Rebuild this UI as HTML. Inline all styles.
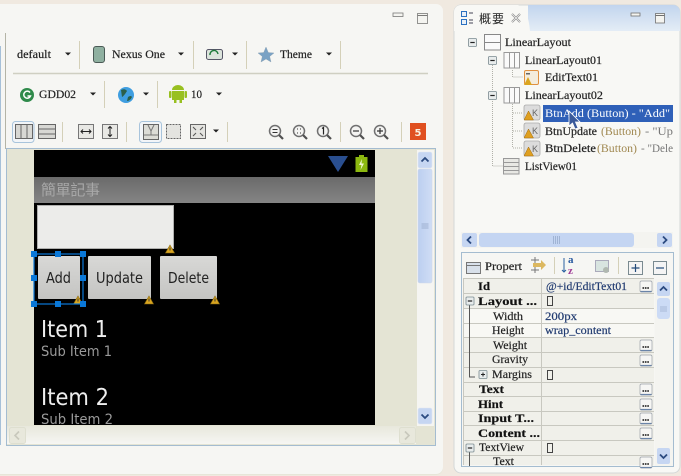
<!DOCTYPE html>
<html><head><meta charset="utf-8">
<style>
html,body{margin:0;padding:0;background:#f0e9e0;width:681px;height:476px;overflow:hidden}
svg{display:block;filter:blur(.3px)}
text{font-family:"Liberation Serif","Noto Serif CJK SC",serif;font-size:12px;fill:#222;stroke:#222;stroke-width:.2px}
.b{font-weight:bold;fill:#111}
.a{font-family:"DejaVu Sans","Noto Sans CJK TC",sans-serif;stroke:none}
</style></head>
<body>
<svg width="681" height="476" viewBox="0 0 681 476" xmlns="http://www.w3.org/2000/svg">
<defs>
<linearGradient id="tab" x1="0" x2="0" y1="0" y2="1"><stop offset="0" stop-color="#c2d5ee"/><stop offset="1" stop-color="#e4edf6"/></linearGradient>
<linearGradient id="btn" x1="0" x2="0" y1="0" y2="1"><stop offset="0" stop-color="#d8d8d6"/><stop offset="1" stop-color="#c4c4c2"/></linearGradient>
<linearGradient id="bar" x1="0" x2="0" y1="0" y2="1"><stop offset="0" stop-color="#6a6a6a"/><stop offset="1" stop-color="#858585"/></linearGradient>
<linearGradient id="hs" x1="0" x2="0" y1="0" y2="1"><stop offset="0" stop-color="#e8e8dc"/><stop offset="1" stop-color="#f6f6f3"/></linearGradient>
<linearGradient id="blu" x1="0" x2="1" y1="0" y2="0"><stop offset="0" stop-color="#bccff0"/><stop offset="1" stop-color="#cfddf5"/></linearGradient>
<path id="dd" d="M-3 -1.500H3L0 1.500Z" fill="#222"/>
<g id="warn"><path d="M0 -4L4.500 4H-4.500Z" fill="#d9a520" stroke="#8a6a10" stroke-width=".6"/><rect x="-.5" y="-1.500" width="1" height="3" fill="#333"/></g>
<g id="h"><rect x="-3" y="-3" width="6" height="6" fill="#0a78d8"/></g>
<g id="mag"><circle r="5.500" fill="#f4f4f2" stroke="#707070" stroke-width="1.500"/><path d="M4 4L8 8" stroke="#505050" stroke-width="2.200"/></g>
<g id="dots"><rect x="0" y="0" width="12" height="11" rx="1.500" fill="#f6f6f4" stroke="#9aa0a8" stroke-width=".7"/><path d="M2.500 7H9.500" stroke="#111" stroke-width="1.600" stroke-dasharray="1.600 .8"/><path d="M.5 10.500H11.500" stroke="#6a84a8" stroke-width="1.200"/></g>
<g id="minus"><rect x="-4" y="-4" width="8" height="8" rx="1" fill="#e8ecec" stroke="#7a8a90" stroke-width=".8"/><path d="M-2.200 0H2.200" stroke="#222" stroke-width="1.200"/></g>
<g id="okb"><rect x="0" y="0" width="16" height="15" rx="2" fill="#dcdcdc" stroke="#aaa" stroke-width=".8"/><text x="8" y="11" class="a" style="font-size:9px;font-family:'Liberation Sans';fill:#666">K</text><path d="M4.500 6L9.500 15H0Z" fill="#dfa020" stroke="#a06a10" stroke-width=".5"/></g>
<path id="up" d="M-3.500 1.500L0 -2L3.500 1.500" fill="none" stroke="#2b4a80" stroke-width="1.800"/>
<path id="down" d="M-3.500 -1.500L0 2L3.500 -1.500" fill="none" stroke="#2b4a80" stroke-width="1.800"/>
</defs>

<rect width="681" height="476" fill="#f0e9e0"/>
<!-- LEFT PANEL -->
<rect x="-10" y="5" width="453" height="470" rx="7" fill="#e6e6d8"/>
<rect x="-10" y="4" width="453" height="470" rx="7" fill="#f6f6f3"/>
<rect x="393" y="13" width="10" height="3.500" fill="#f4f4f0" stroke="#7a7a78" stroke-width=".8"/>
<rect x="417.500" y="13.500" width="10" height="10" fill="#f4f4f0" stroke="#7a7a78" stroke-width=".8"/>
<path d="M417.500 15.500H427.500" stroke="#7a7a78"/>
<path d="M5.500 33V149" stroke="#b4b4a6"/>
<path d="M.5 46V445" stroke="#a6c0d8"/>

<!-- row 1 -->
<text x="17" y="58" textLength="34" lengthAdjust="spacingAndGlyphs">default</text>
<use href="#dd" x="68" y="54"/>
<path d="M79.500 41V69M193.500 41V69M246.500 41V69M340.500 41V69" stroke="#d4d0b8"/>
<rect x="93.500" y="46.500" width="11" height="16" rx="2.500" fill="#8fb0a0" stroke="#4a5a55"/>
<text x="112" y="58" textLength="53" lengthAdjust="spacingAndGlyphs">Nexus One</text>
<use href="#dd" x="181" y="54"/>
<rect x="206.500" y="49.500" width="16" height="10" rx="2" fill="#dce4dc" stroke="#556"/>
<path d="M210 55A4 4 0 0 1 218 54" stroke="#1d7a3a" stroke-width="1.400" fill="none"/>
<use href="#dd" x="235" y="54"/>
<path d="M266 47L268.300 52.500L274 53L269.700 56.500L271 62L266 59L261 62L262.300 56.500L258 53L263.700 52.500Z" fill="#7aa2c4" stroke="#8aa0b0" stroke-width=".4"/>
<text x="280" y="58" textLength="32" lengthAdjust="spacingAndGlyphs">Theme</text>
<use href="#dd" x="329" y="54"/>
<path d="M13 73.500H428" stroke="#cfcfc2" stroke-width="1.500"/>

<!-- row 2 -->
<circle cx="27" cy="95" r="7" fill="#2f8a4a"/><path d="M30 92.500A3.500 3.500 0 1 0 30.500 96H27.500" fill="none" stroke="#fff" stroke-width="1.500"/>
<text x="39" y="98" textLength="37" lengthAdjust="spacingAndGlyphs">GDD02</text>
<use href="#dd" x="93" y="94"/>
<path d="M104.500 81V108M157.500 81V108" stroke="#d4d0b8"/>
<circle cx="126" cy="95" r="8" fill="#3f9ee0"/><path d="M121 90Q125 88 127 91Q124 96 122 97ZM128 97Q131 95 132 97Q130 101 127 101Z" fill="#2b5f4a"/>
<use href="#dd" x="146" y="94"/>
<rect x="172" y="91" width="12" height="9" fill="#98c020"/><path d="M172 90A6 5 0 0 1 184 90Z" fill="#98c020"/>
<rect x="169" y="91" width="2.500" height="7" rx="1" fill="#98c020"/><rect x="184.500" y="91" width="2.500" height="7" rx="1" fill="#98c020"/>
<rect x="174" y="100" width="2.500" height="3" fill="#98c020"/><rect x="179.500" y="100" width="2.500" height="3" fill="#98c020"/>
<text x="191" y="98" textLength="11" lengthAdjust="spacingAndGlyphs">10</text>
<use href="#dd" x="219" y="94"/>

<!-- row 3 -->
<rect x="12.500" y="121.500" width="21.500" height="21" rx="3" fill="#f2f5f8" stroke="#a8c4dc"/>
<rect x="15.500" y="124.500" width="17" height="14" fill="#d8d8d4" stroke="#666"/>
<path d="M21 125V138M27 125V138" stroke="#666"/>
<rect x="38.500" y="124.500" width="17" height="14" fill="#d8d8d4" stroke="#666"/>
<path d="M39 129H55M39 134H55" stroke="#666"/>
<path d="M62.500 122V142M126.500 122V142M227.500 122V142M340.500 122V142M401.500 122V142" stroke="#d4d0b8"/>
<rect x="78.500" y="124.500" width="15" height="14" fill="#e8e8e4" stroke="#777"/>
<path d="M81 131.500H91M83 129.500L81 131.500L83 133.500M89 129.500L91 131.500L89 133.500" stroke="#222" fill="none"/>
<rect x="102.500" y="124.500" width="15" height="14" fill="#e8e8e4" stroke="#777"/>
<path d="M110 126.500V136.500M108 128.500L110 126.500L112 128.500M108 134.500L110 136.500L112 134.500" stroke="#222" fill="none"/>
<rect x="139.500" y="121.500" width="22" height="21" rx="3" fill="#f2f5f8" stroke="#a8c4dc"/>
<rect x="143.500" y="124.500" width="15" height="15" fill="#dcdcd6" stroke="#666"/>
<path d="M148 125L151 131L154 125M151 131V135M144 135H158" stroke="#777" fill="none"/>
<rect x="166.500" y="124.500" width="14" height="14" fill="#e4e4e0" stroke="#666" stroke-dasharray="2 1"/>
<rect x="190.500" y="124.500" width="15" height="14" fill="#e4e4e0" stroke="#666"/>
<path d="M193 127L196 130M203 127L200 130M193 136L196 133M203 136L200 133" stroke="#555"/>
<use href="#dd" x="216" y="131"/>
<use href="#mag" x="275" y="131"/><path d="M272.500 129.500H277.500M272.500 132.500H277.500" stroke="#333"/>
<use href="#mag" x="299" y="131"/><path d="M297 129H298M300 129H301M297 133H298M300 133H301" stroke="#333"/>
<use href="#mag" x="323" y="131"/><path d="M322 128.500L323.500 127.500V134.500" stroke="#222" fill="none" stroke-width="1.200"/>
<use href="#mag" x="356" y="131"/><path d="M353 131H359" stroke="#333" stroke-width="1.200"/>
<use href="#mag" x="380" y="131"/><path d="M377 131H383M380 128V134" stroke="#333" stroke-width="1.200"/>
<rect x="410" y="123" width="16" height="17" fill="#e05020"/>
<text x="414.500" y="136" class="a" style="font-size:10px;font-weight:bold;fill:#f8f0e0">5</text>

<!-- CANVAS -->
<rect x="6.500" y="148.500" width="429" height="297" fill="#e4e4d4" stroke="#a4bcd0"/>
<rect x="34" y="150" width="341" height="275" fill="#000"/>
<path d="M328 156H348L338 172Z" fill="#2a4f90"/>
<rect x="355.500" y="157" width="12" height="15" fill="#8cb810"/><rect x="359" y="155" width="5" height="2" fill="#8cb810"/>
<path d="M362 159L359 165H361.500L360.500 170L364 163.500H361.500Z" fill="#f0f6d0"/>
<rect x="34" y="177" width="341" height="26" fill="url(#bar)"/>
<text x="41" y="195" textLength="59" class="a" style="font-size:15px;fill:#a8a8a8">簡單記事</text>
<rect x="37.500" y="205.500" width="136" height="43" fill="#ececea" stroke="#b0b0ae"/>
<use href="#warn" x="170" y="249"/>

<rect x="38" y="256" width="42" height="43" rx="1" fill="url(#btn)"/>
<rect x="88" y="256" width="63" height="43" rx="1" fill="url(#btn)"/>
<rect x="160" y="256" width="57" height="43" rx="1" fill="url(#btn)"/>
<text x="46" y="283" textLength="25" lengthAdjust="spacingAndGlyphs" class="a" style="font-size:15px;fill:#222">Add</text>
<text x="96" y="283" textLength="47" lengthAdjust="spacingAndGlyphs" class="a" style="font-size:15px;fill:#222">Update</text>
<text x="168" y="283" textLength="41" lengthAdjust="spacingAndGlyphs" class="a" style="font-size:15px;fill:#222">Delete</text>
<use href="#warn" x="78" y="300"/><use href="#warn" x="149" y="300"/><use href="#warn" x="215" y="300"/>
<rect x="34" y="254" width="49" height="50" fill="none" stroke="#0a78d8" stroke-width="1.200"/>
<use href="#h" x="34" y="254"/><use href="#h" x="58" y="254"/><use href="#h" x="83" y="254"/>
<use href="#h" x="34" y="278"/><use href="#h" x="83" y="278"/>
<use href="#h" x="34" y="304"/><use href="#h" x="58" y="304"/><use href="#h" x="83" y="304"/>

<text x="41" y="337" textLength="67" lengthAdjust="spacingAndGlyphs" class="a" style="font-size:23px;fill:#eee">Item 1</text>
<text x="41" y="356" textLength="71" lengthAdjust="spacingAndGlyphs" class="a" style="font-size:14px;fill:#9a9a9a">Sub Item 1</text>
<text x="41" y="405" textLength="68" lengthAdjust="spacingAndGlyphs" class="a" style="font-size:23px;fill:#eee">Item 2</text>
<svg x="34" y="410" width="341" height="15" viewBox="34 410 341 15"><text x="41" y="424" textLength="72" lengthAdjust="spacingAndGlyphs" class="a" style="font-size:14px;fill:#9a9a9a">Sub Item 2</text></svg>

<!-- canvas scrollbars -->
<rect x="417" y="150" width="17" height="276" fill="#f5f5f2"/>
<rect x="418" y="152" width="14" height="16" rx="2" fill="#c6d6f2" stroke="#dfe6f2" stroke-width=".6"/><use href="#up" x="425" y="160"/>
<rect x="418" y="169" width="14" height="114" rx="2" fill="url(#blu)" stroke="#cfd8e8" stroke-width=".6"/>
<path d="M421.500 224H428.500M421.500 226H428.500M421.500 228H428.500" stroke="#9eb0d0"/>
<rect x="418" y="408" width="14" height="16" rx="2" fill="#c6d6f2" stroke="#dfe6f2" stroke-width=".6"/><use href="#down" x="425" y="416"/>
<rect x="7" y="426" width="409" height="18" fill="url(#hs)"/>
<rect x="416" y="426" width="19" height="18" fill="#e4e4d4"/>
<rect x="9.500" y="427.500" width="16" height="16" rx="2" fill="#e8e8dc" stroke="#dedfd0"/><path d="M19 431.500L15 435.500L19 439.500" fill="none" stroke="#c8c8bc" stroke-width="1.600"/>
<rect x="399.500" y="427.500" width="16" height="16" rx="2" fill="#e8e8dc" stroke="#dedfd0"/><path d="M405 431.500L409 435.500L405 439.500" fill="none" stroke="#c8c8bc" stroke-width="1.600"/>

<!-- RIGHT PANEL -->
<rect x="454" y="5" width="226" height="468" rx="7" fill="#f8f8f5" stroke="#d4d8d8"/>
<path d="M528 5H673A7 7 0 0 1 680 12V31H528Z" fill="url(#tab)"/>
<path d="M454 31V12A7 7 0 0 1 461 5H518Q528 8 530 31Z" fill="#f8f8f5"/>
<rect x="461.500" y="11.500" width="5" height="5" fill="#e8f0f8" stroke="#2a70c0"/>
<rect x="461.500" y="19.500" width="5" height="5" fill="#e8f0f8" stroke="#2a70c0"/>
<path d="M469 13H473M469 20H473M469 23H473" stroke="#445"/>
<text x="479" y="23" textLength="25" class="a" style="font-size:12px;fill:#222">概要</text>
<path d="M512 14L520 22M520 14L512 22" stroke="#8a8a8a" stroke-width="2" /><path d="M512 14L520 22M520 14L512 22" stroke="#f4f4f4" stroke-width=".8"/>
<rect x="631" y="13" width="9" height="3" fill="#f4f4f0" stroke="#707070" stroke-width=".8"/>
<rect x="655.500" y="13.500" width="9" height="9.500" fill="#f4f4f0" stroke="#707070" stroke-width=".8"/>
<path d="M655.500 15.500H664.500" stroke="#707070"/>

<!-- tree -->
<path d="M492.500 65V91M492.500 99V166H503M512.500 70V77H523M512.500 104V148M513 113H523M513 131H523M513 148H523" stroke="#b0b0a8" stroke-dasharray="1 1" fill="none"/>
<use href="#minus" x="472.500" y="42.500"/><use href="#minus" x="492.500" y="60.500"/><use href="#minus" x="492.500" y="95.500"/>
<rect x="484.500" y="34.500" width="16" height="15.500" fill="#fafafa" stroke="#888"/><path d="M485 42.500H500" stroke="#888"/>
<rect x="504" y="52.500" width="15.500" height="15.500" fill="#fafafa" stroke="#999"/><path d="M509.500 53V68M514.500 53V68" stroke="#999"/>
<rect x="504" y="87.500" width="15.500" height="15.500" fill="#fafafa" stroke="#999"/><path d="M509.500 88V103M514.500 88V103" stroke="#999"/>
<rect x="524.500" y="70.500" width="14" height="14" rx="1.500" fill="#f4ecdc" stroke="#e09040"/><path d="M528 77L532 85H524Z" fill="#dba520"/><rect x="526" y="73" width="4" height="1.500" fill="#666"/>
<use href="#okb" x="524" y="105"/><use href="#okb" x="524" y="123"/><use href="#okb" x="524" y="141"/>
<rect x="503.500" y="158.500" width="15.500" height="15.500" fill="#e8e8e4" stroke="#999"/><path d="M504 162.500H519M504 166.500H519M504 170.500H519" stroke="#999"/>
<text x="505" y="46" textLength="66" lengthAdjust="spacingAndGlyphs">LinearLayout</text>
<text x="525" y="64" textLength="77" lengthAdjust="spacingAndGlyphs">LinearLayout01</text>
<text x="545" y="81" textLength="53" lengthAdjust="spacingAndGlyphs">EditText01</text>
<text x="525" y="99" textLength="78" lengthAdjust="spacingAndGlyphs">LinearLayout02</text>
<rect x="543" y="105" width="130" height="17" fill="#2f60b8"/>
<text x="545" y="117" textLength="125" lengthAdjust="spacingAndGlyphs" style="fill:#fff;stroke:none">BtnAdd (Button) - "Add"</text>
<text x="545" y="135" textLength="52" lengthAdjust="spacingAndGlyphs">BtnUpdate</text>
<text x="601" y="135" textLength="40" lengthAdjust="spacingAndGlyphs" style="fill:#a08850;stroke:none">(Button)</text>
<text x="645" y="135" textLength="28" lengthAdjust="spacingAndGlyphs" style="fill:#777;stroke:none">- "Up</text>
<text x="545" y="152" textLength="51" lengthAdjust="spacingAndGlyphs">BtnDelete</text>
<text x="597" y="152" textLength="40" lengthAdjust="spacingAndGlyphs" style="fill:#a08850;stroke:none">(Button)</text>
<text x="641" y="152" textLength="32" lengthAdjust="spacingAndGlyphs" style="fill:#777;stroke:none">- "Dele</text>
<text x="525" y="170" textLength="52" lengthAdjust="spacingAndGlyphs">ListView01</text>
<path d="M569 111V126L572.500 123L575 129L578 128L575.500 122H580Z" fill="#3a5a9a" stroke="#fff" stroke-width=".8"/>

<!-- tree h scrollbar -->
<rect x="461" y="232" width="212" height="16" fill="#f4f4f0"/>
<rect x="462" y="233" width="15" height="14" rx="2" fill="#c6d6f2"/><path d="M471 236.500L467.500 240L471 243.500" fill="none" stroke="#2b4a80" stroke-width="1.800"/>
<rect x="479" y="233" width="155" height="14" rx="3" fill="#c4d5f2"/>
<path d="M553.500 236V244M555.500 236V244M557.500 236V244M559.500 236V244" stroke="#a0b4d4"/>
<rect x="657" y="233" width="15" height="14" rx="2" fill="#c6d6f2"/><path d="M663 236.500L666.500 240L663 243.500" fill="none" stroke="#2b4a80" stroke-width="1.800"/>

<!-- properties -->
<rect x="461.500" y="252.500" width="212" height="214" fill="#f6f6f3" stroke="#a4bcd0"/>
<rect x="466.500" y="262.500" width="14" height="11" fill="#d8e0ea" stroke="#777"/><path d="M467 265.500H480" stroke="#777"/>
<text x="485" y="270" textLength="37" lengthAdjust="spacingAndGlyphs">Propert</text>
<path d="M531 260H539M531 270H539M535 257V263M535 267V273" stroke="#777"/><path d="M533 263H541V260L546 265L541 270V267H533Z" fill="#dcb860"/>
<path d="M554.500 257V274M618.500 257V274" stroke="#d4d0b8"/>
<path d="M564 258V272M562 270L564 272L566 270" stroke="#2a60a0" fill="none"/>
<text x="568" y="263" class="b" style="fill:#2a5aa0;stroke:none;font-size:11px">a</text>
<text x="568" y="274" class="b" style="fill:#a04098;stroke:none;font-size:11px">z</text>
<rect x="595.500" y="260.500" width="13" height="11" fill="#d8e4e0" stroke="#aab"/><circle cx="606" cy="270" r="3" fill="#b0b8b0"/>
<rect x="628.500" y="261.500" width="14" height="13" fill="#f4f4f4" stroke="#7a8a90"/><path d="M631.500 268H639.500M635.500 264V272" stroke="#224a7a" stroke-width="1.200"/>
<rect x="653.500" y="261.500" width="13" height="13" fill="#f4f4f4" stroke="#7a8a90"/><path d="M656 268H664" stroke="#224a7a" stroke-width="1.200"/>

<!-- table -->
<rect x="463" y="278" width="191" height="187" fill="#f0f0ea"/>
<rect x="463" y="308" width="191" height="29" fill="#f8f8f4"/>
<path d="M463 278.500H654M463 293.500H654M463 308.500H654M463 323.500H654M463 337.500H654M463 352.500H654M463 367.500H654M463 382.500H654M463 396.500H654M463 411.500H654M463 425.500H654M463 440.500H654M463 455.500H654" stroke="#c8c8c0"/>
<path d="M541.500 278V465M463.500 278V465" stroke="#c8c8c0"/>
<path d="M469.500 305V377H475M469.500 452V466" stroke="#555" fill="none"/>
<use href="#minus" x="470" y="301"/><use href="#minus" x="470" y="448"/>
<rect x="479" y="370.500" width="8" height="8" rx="1" fill="#e8ecec" stroke="#7a8a90" stroke-width=".8"/><path d="M481 374.500H485M483 372.500V376.500" stroke="#222"/>
<g>
<text x="478" y="290" class="b" textLength="12" lengthAdjust="spacingAndGlyphs">Id</text>
<text x="478" y="305" class="b" textLength="59" lengthAdjust="spacingAndGlyphs">Layout ...</text>
<text x="493" y="320" textLength="30" lengthAdjust="spacingAndGlyphs">Width</text>
<text x="492" y="334" textLength="32" lengthAdjust="spacingAndGlyphs">Height</text>
<text x="493" y="349" textLength="34" lengthAdjust="spacingAndGlyphs">Weight</text>
<text x="492" y="363" textLength="36" lengthAdjust="spacingAndGlyphs">Gravity</text>
<text x="492" y="378" textLength="40" lengthAdjust="spacingAndGlyphs">Margins</text>
<text x="479" y="393" class="b" textLength="25" lengthAdjust="spacingAndGlyphs">Text</text>
<text x="478" y="408" class="b" textLength="25" lengthAdjust="spacingAndGlyphs">Hint</text>
<text x="478" y="422" class="b" textLength="56" lengthAdjust="spacingAndGlyphs">Input T...</text>
<text x="478" y="437" class="b" textLength="62" lengthAdjust="spacingAndGlyphs">Content ...</text>
<text x="479" y="451" textLength="45" lengthAdjust="spacingAndGlyphs">TextView</text>
<svg x="480" y="455" width="40" height="10" viewBox="480 455 40 10"><text x="493" y="465" textLength="21" lengthAdjust="spacingAndGlyphs">Text</text></svg>
</g>
<text x="546" y="290" textLength="81" lengthAdjust="spacingAndGlyphs" style="fill:#203a70;stroke:#203a70">@+id/EditText01</text>
<text x="545" y="320" textLength="32" lengthAdjust="spacingAndGlyphs" style="fill:#203a70;stroke:#203a70">200px</text>
<text x="545" y="334" textLength="66" lengthAdjust="spacingAndGlyphs" style="fill:#203a70;stroke:#203a70">wrap_content</text>
<path d="M547.500 296.500H552.500V305.500H547.500ZM547.500 370.500H552.500V379.500H547.500ZM547.500 443.500H552.500V452.500H547.500Z" fill="none" stroke="#444"/>
<use href="#dots" x="640" y="281"/><use href="#dots" x="640" y="340"/><use href="#dots" x="640" y="355"/>
<use href="#dots" x="640" y="384"/><use href="#dots" x="640" y="399"/><use href="#dots" x="640" y="413"/><use href="#dots" x="640" y="428"/>
<svg x="640" y="455" width="14" height="10" viewBox="640 455 14 10"><use href="#dots" x="640" y="457"/></svg>
<rect x="655" y="279" width="18" height="187" fill="#f4f4f0"/>
<rect x="657" y="282" width="13" height="14" rx="2" fill="#c6d6f2"/><use href="#up" x="663.500" y="289"/>
<rect x="657" y="298" width="13" height="21" rx="3" fill="#ccdbf5"/>
<path d="M660 307H667M660 309H667M660 311H667" stroke="#a8bad8"/>
<rect x="657" y="448" width="13" height="16" rx="2" fill="#c6d6f2"/><use href="#down" x="663.500" y="456"/>
</svg>
</body></html>
